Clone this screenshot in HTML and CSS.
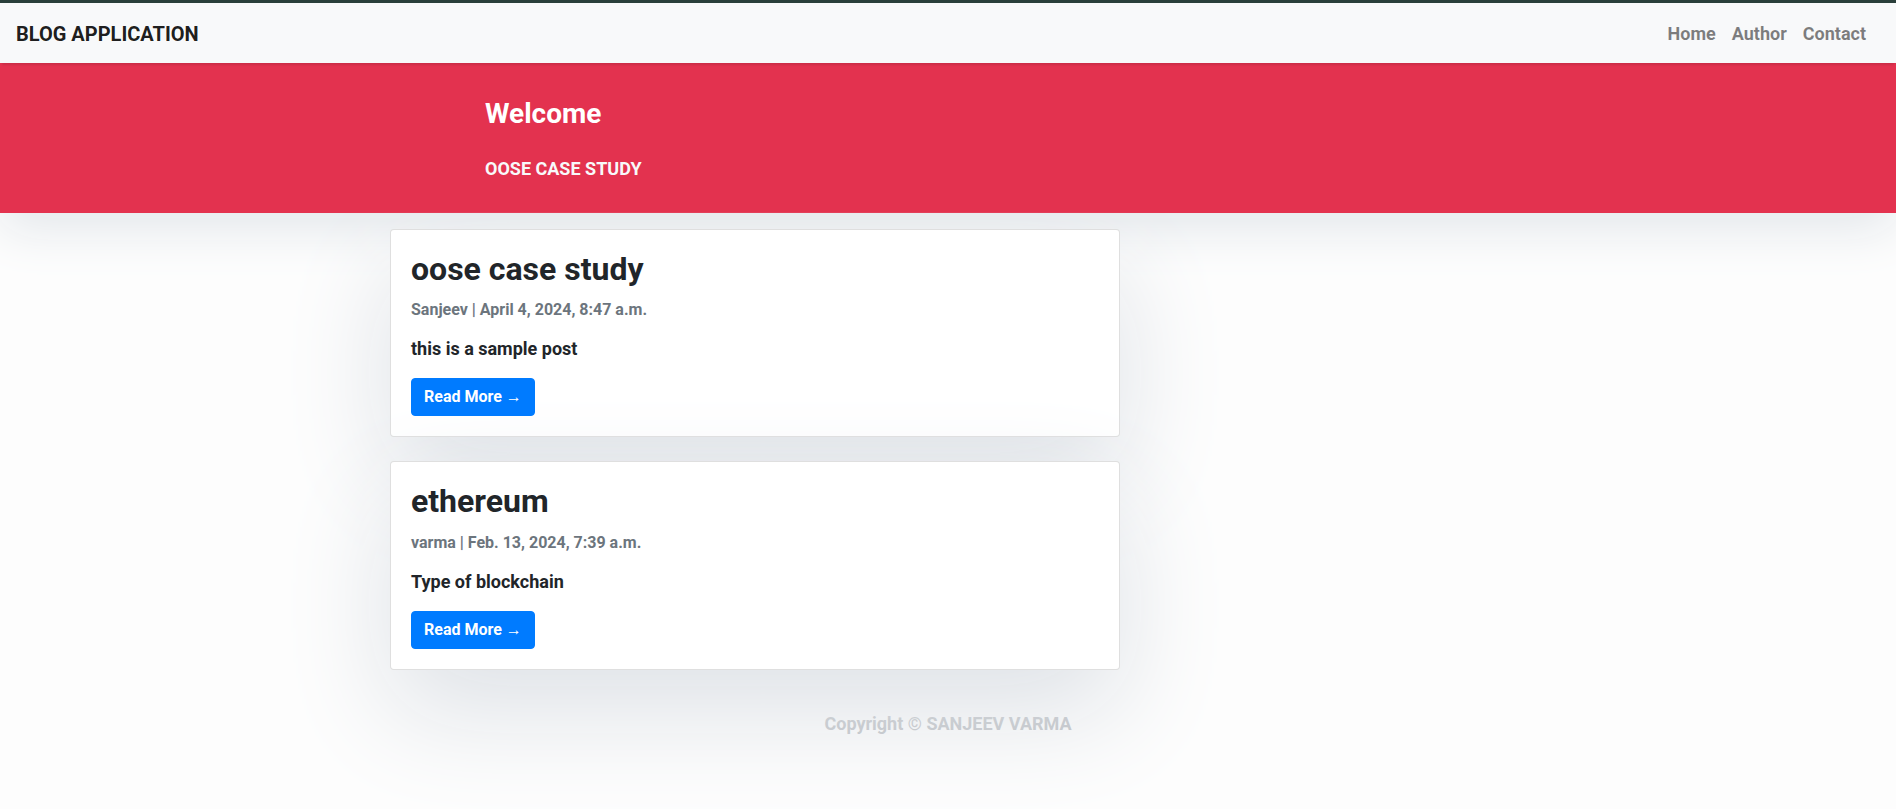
FILE: index.html
```html
<!DOCTYPE html>
<html lang="en">
<head>
<meta charset="utf-8">
<title>Blog Application</title>
<link rel="stylesheet" href="styles.css">
</head>
<body>
<nav class="navbar">
  <a class="brand" href="#">BLOG APPLICATION</a>
  <ul class="nav-links">
    <li><a href="#">Home</a></li>
    <li><a href="#">Author</a></li>
    <li><a href="#">Contact</a></li>
  </ul>
</nav>
<header class="masthead">
  <div class="site-heading">
    <h3 class="site-title">Welcome</h3>
    <p class="site-sub">OOSE CASE STUDY</p>
  </div>
</header>
<main class="main">
  <div class="posts">
    <article class="card">
      <h2 class="card-title">oose case study</h2>
      <p class="card-meta">Sanjeev | April 4, 2024, 8:47 a.m.</p>
      <p class="card-text">this is a sample post</p>
      <a class="btn" href="#">Read More &rarr;</a>
    </article>
    <article class="card">
      <h2 class="card-title">ethereum</h2>
      <p class="card-meta">varma | Feb. 13, 2024, 7:39 a.m.</p>
      <p class="card-text">Type of blockchain</p>
      <a class="btn" href="#">Read More &rarr;</a>
    </article>
  </div>
</main>
<footer class="footer">
  <p class="copyright">Copyright &copy; SANJEEV VARMA</p>
</footer>
</body>
</html>
```
FILE: styles.css
```css
* { box-sizing: border-box; }
html, body { margin: 0; padding: 0; }
body {
  font-family: Roboto, "Liberation Sans", Arial, sans-serif;
  font-size: 18px;
  line-height: 1.5;
  font-weight: 700;
  color: #212529;
  background: #fdfdfd;
  border-top: 3px solid #2a3f3b;
  min-height: 100vh;
}
.navbar {
  position: relative;
  z-index: 2;
  display: flex;
  align-items: center;
  justify-content: space-between;
  height: 60px;
  padding: 1px 16px 0;
  background: #f8f9fa;
  box-shadow: 0 4px 2px -2px rgba(0,0,0,.1);
}
.brand {
  font-size: 20px;
  line-height: 1.5;
  color: rgba(0,0,0,.9);
  text-decoration: none;
}
.nav-links {
  display: flex;
  list-style: none;
  margin: 0;
  padding: 0 6px 0 0;
}
.nav-links a {
  display: block;
  padding: 8px;
  color: rgba(0,0,0,.5);
  text-decoration: none;
}
.masthead {
  background: #e3324f;
  padding: 10px 0 15px;
  box-shadow: 0 16px 48px #E3E7EB;
}
.site-heading {
  width: 926px;
  margin: 0 auto;
}
.site-title {
  font-size: 28px;
  line-height: 1.2;
  font-weight: 700;
  color: #fff;
  margin: 24px 0 24px;
}
.site-sub {
  margin: 0 0 16px;
  color: #f8f9fa;
}
.main {
  width: 1116px;
  margin: 0 auto;
}
.posts {
  width: 730px;
  padding-top: 16px;
  clip-path: inset(0 -600px -600px -600px);
}
.card {
  background: #fff;
  border: 1px solid rgba(0,0,0,.125);
  border-radius: 4px;
  padding: 20px;
  margin-bottom: 24px;
  box-shadow: 0 40px 110px #dde1e6;
}
.card-title {
  font-size: 32px;
  line-height: 1.2;
  font-weight: 700;
  margin: 0 0 12px;
}
.card-meta {
  font-size: 16px;
  line-height: 1.2;
  color: #6c757d;
  margin: 0 0 16px;
}
.card-text {
  margin: 0 0 16px;
}
.btn {
  display: inline-block;
  padding: 6px 12px;
  font-size: 16px;
  line-height: 1.5;
  color: #fff;
  background: #007bff;
  border: 1px solid #007bff;
  border-radius: 4px;
  text-decoration: none;
}
.footer {
  padding: 16px 0;
}
.copyright {
  margin: 0;
  text-align: center;
  color: #bcbfc3;
}
```
